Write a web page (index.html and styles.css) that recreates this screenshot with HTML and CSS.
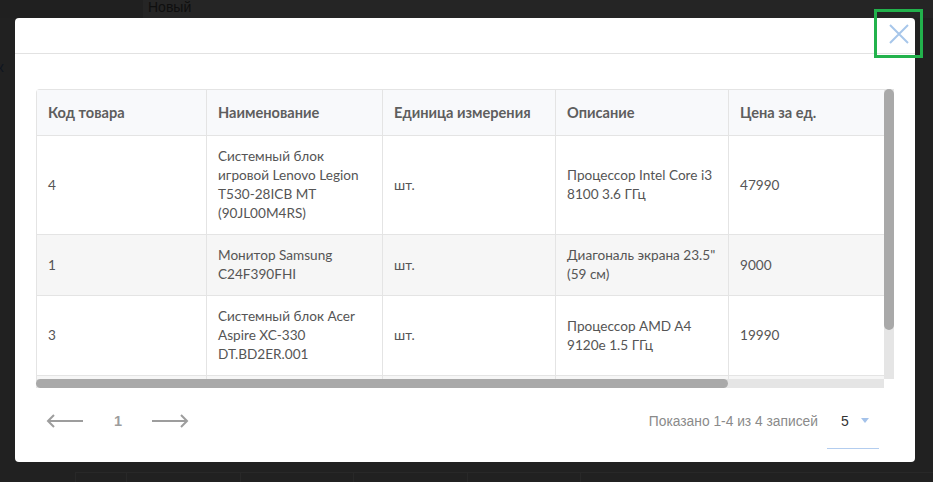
FILE: index.html
```html
<!DOCTYPE html>
<html lang="ru">
<head>
<meta charset="utf-8">
<title>Товары</title>
<link rel="stylesheet" href="styles.css">
</head>
<body>
<div class="page">
  <div class="page-top">
    <div class="page-top-left"></div>
    <div class="page-top-title">Новый</div>
  </div>
  <div class="page-side">к</div>
  <div class="page-grid">
    <div class="pg-cell w1"></div>
    <div class="pg-cell w2"></div>
    <div class="pg-cell w3"></div>
    <div class="pg-cell w4"></div>
    <div class="pg-cell w5"></div>
    <div class="pg-cell w6"></div>
  </div>
</div>

<div class="modal">
  <div class="modal-header">
    <button class="close" aria-label="Закрыть">
      <svg width="22" height="22" viewBox="0 0 22 22"><path d="M2 2L20 20M20 2L2 20" stroke="#a7c6ea" stroke-width="2" fill="none"/></svg>
    </button>
  </div>
  <div class="modal-body">
    <div class="table-frame">
      <div class="table-view">
        <table class="grid">
          <colgroup>
            <col class="c1"><col class="c2"><col class="c3"><col class="c4"><col class="c5"><col class="c6">
          </colgroup>
          <thead>
            <tr>
              <th>Код товара</th>
              <th>Наименование</th>
              <th>Единица измерения</th>
              <th>Описание</th>
              <th>Цена за ед.</th>
              <th>Количество</th>
            </tr>
          </thead>
          <tbody>
            <tr>
              <td>4</td>
              <td>Системный блок<br>игровой Lenovo Legion<br>T530-28ICB MT<br>(90JL00M4RS)</td>
              <td>шт.</td>
              <td>Процессор Intel Core i3<br>8100 3.6 ГГц</td>
              <td>47990</td>
              <td>1</td>
            </tr>
            <tr class="alt">
              <td>1</td>
              <td>Монитор Samsung<br>C24F390FHI</td>
              <td>шт.</td>
              <td>Диагональ экрана 23.5"<br>(59 см)</td>
              <td>9000</td>
              <td>2</td>
            </tr>
            <tr>
              <td>3</td>
              <td>Системный блок Acer<br>Aspire XC-330<br>DT.BD2ER.001</td>
              <td>шт.</td>
              <td>Процессор AMD A4<br>9120e 1.5 ГГц</td>
              <td>19990</td>
              <td>1</td>
            </tr>
            <tr class="alt">
              <td>2</td>
              <td>Клавиатура Logitech<br>K120</td>
              <td>шт.</td>
              <td>Проводная<br>USB</td>
              <td>690</td>
              <td>3</td>
            </tr>
          </tbody>
        </table>
      </div>
      <div class="vbar"><div class="vthumb"></div></div>
      <div class="hbar"><div class="hthumb"></div></div>
      <div class="corner"></div>
    </div>
  </div>
  <div class="modal-footer">
    <div class="pager">
      <span class="arrow">
        <svg width="38" height="14" viewBox="0 0 38 14"><path d="M2 7H37M8 1L2 7L8 13" stroke="#9d9d9d" stroke-width="2" fill="none"/></svg>
      </span>
      <span class="page-num">1</span>
      <span class="arrow">
        <svg width="38" height="14" viewBox="0 0 38 14"><path d="M1 7H36M30 1L36 7L30 13" stroke="#9d9d9d" stroke-width="2" fill="none"/></svg>
      </span>
    </div>
    <div class="info">
      <span class="shown">Показано 1-4 из 4 записей</span>
      <span class="select">
        <span class="select-val">5</span>
        <svg width="8" height="5" viewBox="0 0 8 5"><path d="M0 0H8L4 5Z" fill="#a4c2ea"/></svg>
      </span>
    </div>
  </div>
</div>
</body>
</html>
```

FILE: styles.css
```css
* { box-sizing: border-box; }

html, body {
  margin: 0;
  padding: 0;
}

body {
  width: 933px;
  height: 482px;
  overflow: hidden;
  background: #212121;
  font-family: "Liberation Sans", Arial, sans-serif;
}

.page {
  height: 482px;
  display: flex;
  flex-direction: column;
}

.page-top {
  display: flex;
  height: 18px;
}

.page-top-left {
  width: 143px;
  background: #202020;
}

.page-top-title {
  flex: 1;
  background: #252525;
  color: #0f0f0f;
  font-size: 14px;
  line-height: 14px;
  padding-left: 5px;
}

.page-side {
  color: #0f1520;
  font-size: 15px;
  line-height: 16px;
  margin-top: 41px;
  margin-left: -3px;
  width: 20px;
}

.page-grid {
  margin-top: auto;
  margin-left: 75px;
  height: 10px;
  border-top: 1px solid #282828;
  display: flex;
}

.pg-cell {
  border-left: 1px solid #282828;
  height: 10px;
}
.w1 { width: 51px; }
.w2 { width: 114px; }
.w3 { width: 113px; }
.w4 { width: 114px; }
.w5 { width: 113px; }
.w6 { width: 120px; }

/* modal */
.modal {
  position: fixed;
  left: 15px;
  top: 18px;
  width: 900px;
  height: 444px;
  background: #fff;
  border-radius: 4px;
  display: flex;
  flex-direction: column;
}

.modal-header {
  height: 36px;
  border-bottom: 1px solid #e2e2e2;
  flex: none;
}

.close {
  position: absolute;
  left: 862px;
  top: -6px;
  width: 43px;
  height: 43px;
  border: 0;
  padding: 0;
  background: transparent;
  outline: 3px solid #22b24c;
  outline-offset: 0;
  display: flex;
  align-items: center;
  justify-content: center;
}

.modal-body {
  padding: 35px 21px 0;
  flex: none;
}

.table-frame {
  display: grid;
  grid-template-columns: 848px 10px;
  grid-template-rows: 290px 9px;
  width: 858px;
}

.table-view {
  overflow: hidden;
  border-top-left-radius: 4px;
}

.vbar {
  background: #e5e5e5;
  display: flex;
  flex-direction: column;
}

.vthumb {
  height: 241px;
  background: #a9a9a9;
  border-radius: 5px;
}

.hbar {
  background: #e5e5e5;
  display: flex;
}

.hthumb {
  width: 692px;
  background: #a9a9a9;
  border-radius: 5px;
}

.corner {
  background: #fff;
}

.grid {
  border-collapse: collapse;
  table-layout: fixed;
  width: 1039px;
  font-family: Lato, "Liberation Sans", sans-serif;
  font-size: 13.6px;
  color: #555;
}

.c1 { width: 170px; }
.c2 { width: 176px; }
.c3 { width: 173px; }
.c4 { width: 173px; }
.c5 { width: 170px; }
.c6 { width: 177px; }

.grid th {
  background: #f8f9fb;
  text-align: left;
  font-weight: 700;
  font-size: 14.6px;
  color: #5e5e5e;
  line-height: 19px;
  padding: 13px 10px 13px 11px;
  border: 1px solid #e4e4e4;
  white-space: nowrap;
}

.grid td {
  line-height: 19px;
  padding: 11px 10px 11px 11px;
  border: 1px solid #e4e4e4;
  white-space: nowrap;
  vertical-align: middle;
}

.grid tr.alt td {
  background: #f6f6f6;
}

/* footer */
.modal-footer {
  flex: 1;
  display: flex;
  align-items: center;
  justify-content: space-between;
  padding: 0 36px 8px 31px;
}

.pager {
  display: flex;
  align-items: center;
}

.arrow {
  display: flex;
  width: 38px;
  height: 14px;
}

.page-num {
  font-family: "Liberation Sans", Arial, sans-serif;
  font-weight: 700;
  font-size: 14.5px;
  color: #9d9d9d;
  margin: 0 29px 0 30px;
}

.info {
  display: flex;
  align-items: center;
}

.shown {
  font-family: "Liberation Sans", Arial, sans-serif;
  font-size: 13.8px;
  color: #8a8a8a;
  margin-right: 9px;
}

.select {
  width: 52px;
  height: 38px;
  border-bottom: 1px solid #b3cdef;
  display: flex;
  align-items: center;
  padding-left: 14px;
  gap: 12px;
  margin-top: 18px;
  padding-bottom: 18px;
}

.select-val {
  font-family: "Liberation Sans", Arial, sans-serif;
  font-size: 14px;
  color: #333;
}
```
